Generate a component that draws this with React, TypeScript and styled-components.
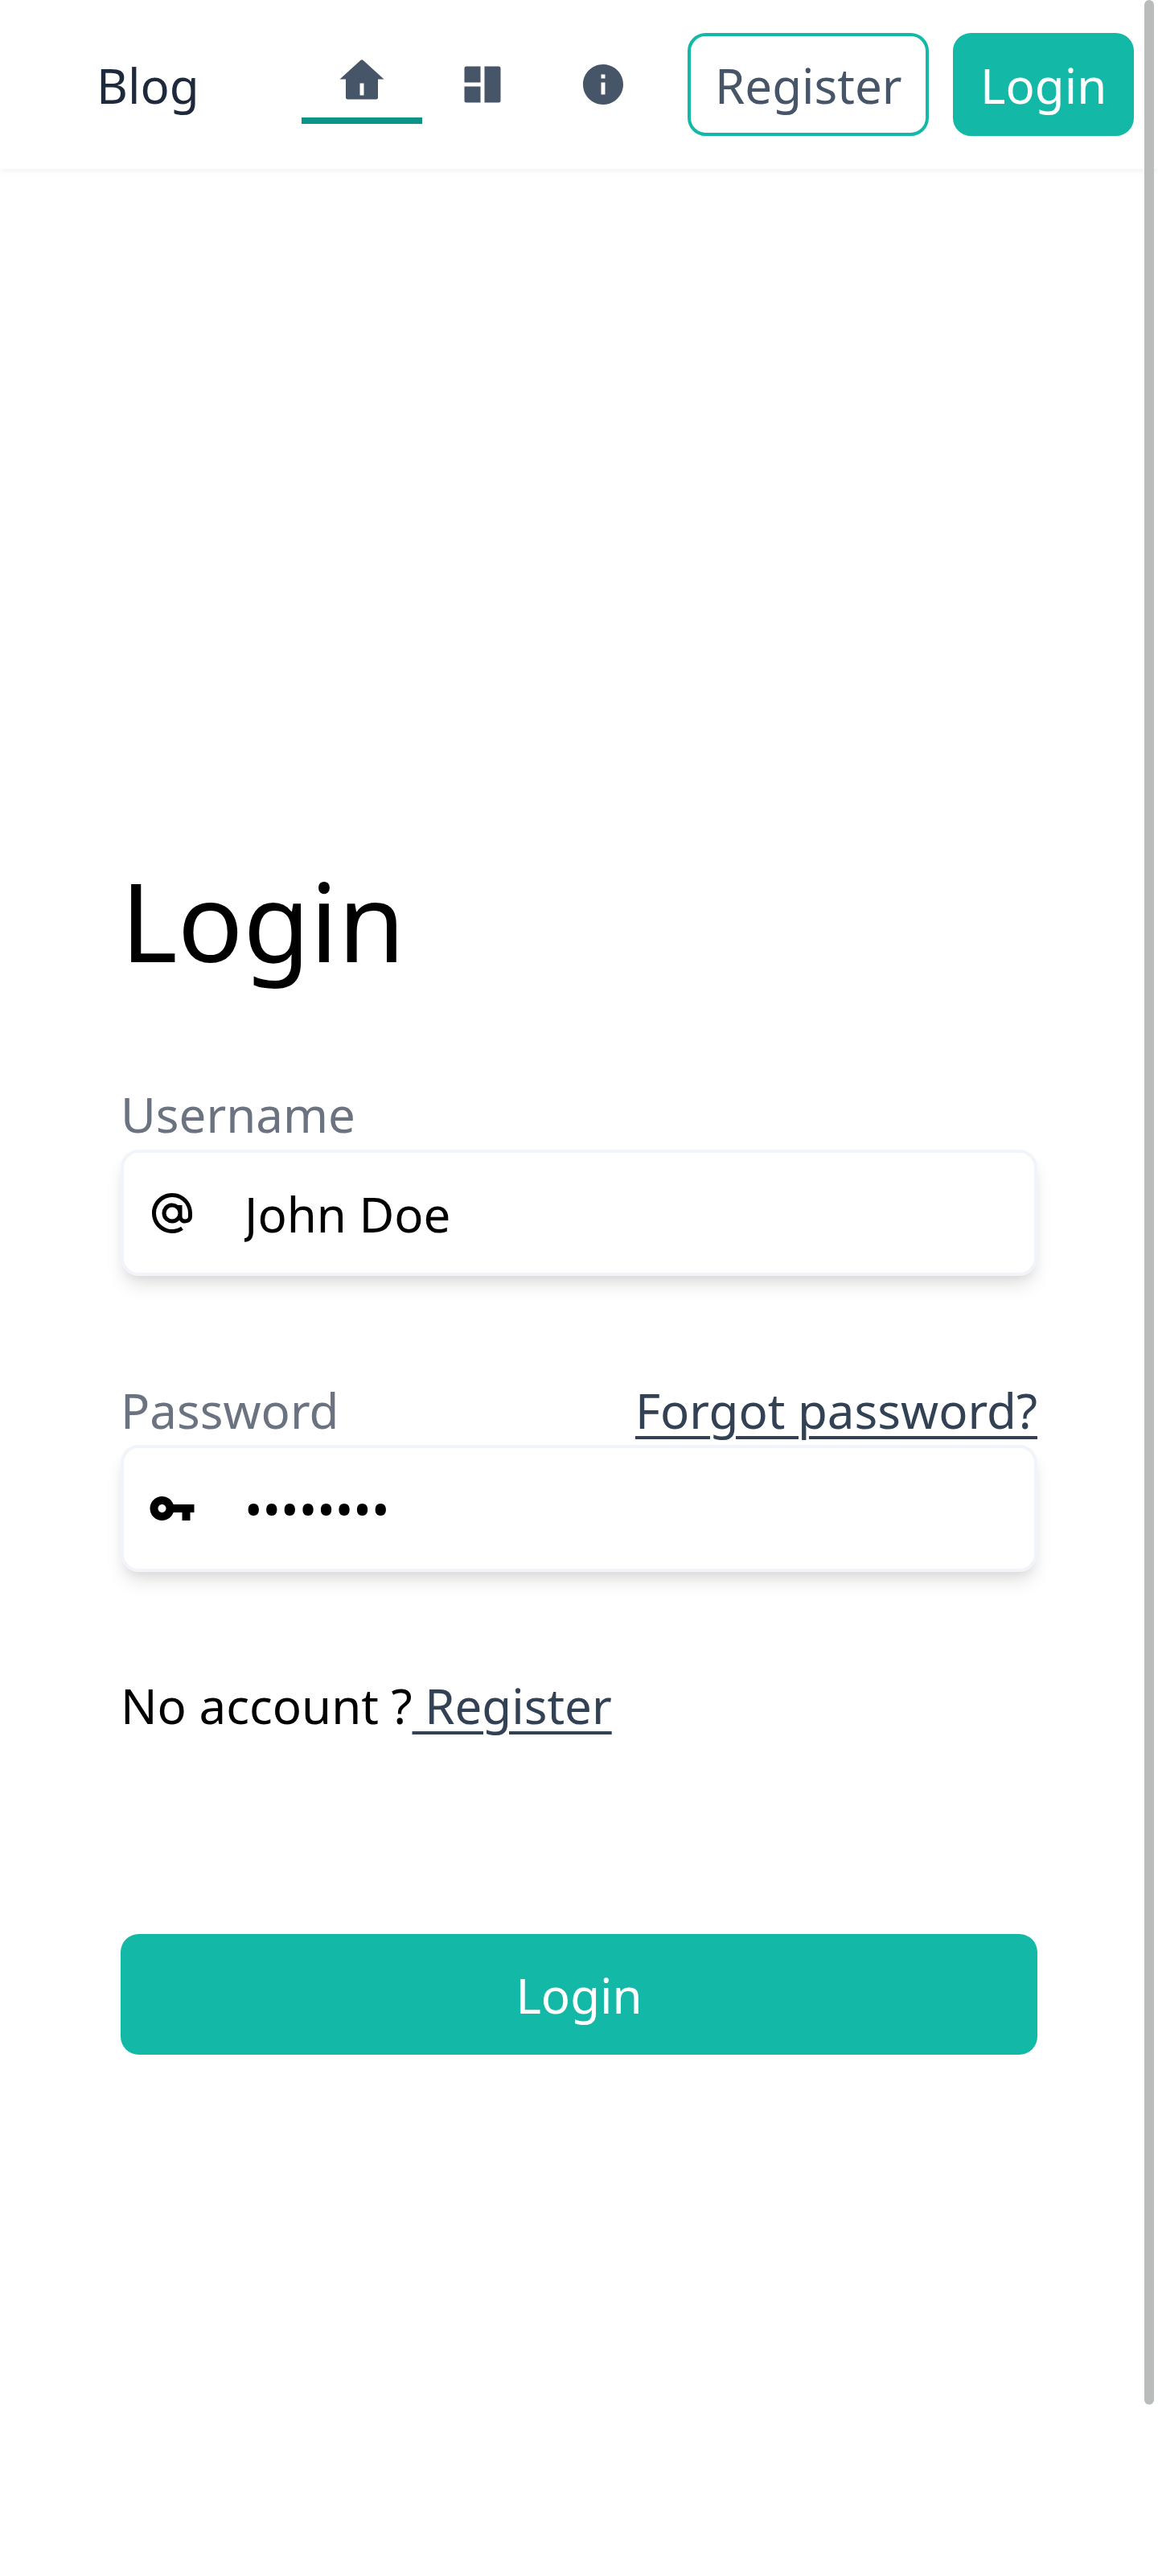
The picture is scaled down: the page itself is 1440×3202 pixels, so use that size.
import React from "react";
import styled, { createGlobalStyle } from "styled-components";

const GlobalStyle = createGlobalStyle`
  *, *::before, *::after { box-sizing: border-box; }
  body {
    margin: 0;
    background: #fff;
    color: #000;
    font-family: "Noto Sans", sans-serif;
    font-size: 60px;
    line-height: 90px;
  }
`;

const Page = styled.div`
  position: relative;
  height: 3202px;
  overflow: hidden;
`;

const Header = styled.header`
  display: flex;
  align-items: center;
  justify-content: space-between;
  height: 210px;
  padding: 0 30px 0 120px;
  background: #fff;
  box-shadow: 0 3.75px 7.5px 0 rgba(0, 0, 0, 0.05);
`;

const Brand = styled.a`
  padding-top: 2px;
  color: #1e293b;
`;

const Actions = styled.div`
  display: flex;
  align-items: center;
  gap: 30px;
`;

const Nav = styled.nav`
  display: flex;
  align-items: center;
`;

const NavItem = styled.a<{ $active?: boolean }>`
  display: flex;
  justify-content: center;
  width: 150px;
  padding: 15px 0;
  color: #475569;
  box-sizing: content-box;
  border-bottom: ${(p) => (p.$active ? "8px solid #0d9488" : "0")};
`;

const Icon = styled.svg`
  display: block;
  width: 60px;
  height: 60px;
  fill: currentColor;
`;

const HeaderButton = styled.button<{ $filled?: boolean }>`
  padding: 16px 29.75px 14px;
  height: 127.5px;
  border: 4px solid #14b8a6;
  border-radius: 22.5px;
  background: ${(p) => (p.$filled ? "#14b8a6" : "transparent")};
  color: ${(p) => (p.$filled ? "#fff" : "#475569")};
  font: inherit;
`;

const Form = styled.form`
  display: flex;
  flex-direction: column;
  padding: 858.75px 150px 0;
`;

const Title = styled.h1`
  margin: 0 0 120px;
  font-size: 135px;
  line-height: 150px;
  font-weight: 400;
`;

const Field = styled.div`
  margin-bottom: 120px;
`;

const LabelRow = styled.div`
  display: flex;
  justify-content: space-between;
  height: 90px;
  padding-top: 1.4px;
`;

const Label = styled.label`
  color: #6b7280;
`;

const Link = styled.a`
  color: #334155;
  text-decoration: underline;
  text-decoration-thickness: 4px;
  text-underline-offset: 9px;
  white-space: pre;
`;

const InputBox = styled.div`
  display: flex;
  align-items: center;
  height: 157.5px;
  padding: 0 30px;
  gap: 60px;
  border: 4px solid #f1f5f9;
  border-radius: 22.5px;
  background: #fff;
  box-shadow: 0 15px 22.5px -3.75px rgba(0, 0, 0, 0.1),
    0 7.5px 15px -7.5px rgba(0, 0, 0, 0.1);
`;

const Input = styled.input`
  flex: 1;
  min-width: 0;
  height: 92px;
  padding: 2px 0 0;
  border: 0;
  outline: 0;
  background: transparent;
  color: #000;
  font: inherit;
`;

const Note = styled.p`
  height: 90px;
  margin: 0 0 240px;
  padding-top: 1px;
`;

const Submit = styled.button`
  height: 150px;
  padding: 31px 30px 29px;
  border: 0;
  border-radius: 22.5px;
  background: #14b8a6;
  color: #fff;
  font: inherit;
`;

const ScrollThumb = styled.div`
  position: absolute;
  top: 0;
  right: 5.5px;
  width: 11.25px;
  height: 2989px;
  border-radius: 6px;
  background: #babcbb;
`;

const paths = {
  home: "M20 20a1 1 0 0 1-1 1H5a1 1 0 0 1-1-1v-9H1l10.327-9.388a1 1 0 0 1 1.346 0L23 11h-3v9zm-9-7v6h2v-6h-2z",
  layout:
    "M11 13v8H4a1 1 0 0 1-1-1v-7h8zm2-10h7a1 1 0 0 1 1 1v16a1 1 0 0 1-1 1h-7V3zM3 4a1 1 0 0 1 1-1h7v8H3V4z",
  info: "M12 22C6.477 22 2 17.523 2 12S6.477 2 12 2s10 4.477 10 10-4.477 10-10 10zm-1-11v6h2v-6h-2zm0-4v2h2V7h-2z",
  at: "M20 12a8 8 0 1 0-3.562 6.657l1.11 1.664A9.953 9.953 0 0 1 12 22C6.477 22 2 17.523 2 12S6.477 2 12 2s10 4.477 10 10v1.5a3.5 3.5 0 0 1-6.396 1.966A5 5 0 1 1 15 8h2v5.5a1.5 1.5 0 0 0 3 0V12zm-8-3a3 3 0 1 0 0 6 3 3 0 0 0 0-6z",
  key: "M12.65 10C11.83 7.67 9.61 6 7 6c-3.31 0-6 2.69-6 6s2.69 6 6 6c2.61 0 4.83-1.67 5.65-4H17v4h4v-4h2v-4H12.65zM7 14c-1.1 0-2-.9-2-2s.9-2 2-2 2 .9 2 2-.9 2-2 2z",
};

function Glyph({ name }: { name: keyof typeof paths }) {
  return (
    <Icon viewBox="0 0 24 24" aria-hidden="true">
      <path d={paths[name]} />
    </Icon>
  );
}

export default function App() {
  return (
    <>
      <GlobalStyle />
      <Page>
        <Header>
          <Brand>Blog</Brand>
          <Actions>
            <Nav>
              <NavItem $active aria-label="Home">
                <Glyph name="home" />
              </NavItem>
              <NavItem aria-label="Dashboard">
                <Glyph name="layout" />
              </NavItem>
              <NavItem aria-label="About">
                <Glyph name="info" />
              </NavItem>
            </Nav>
            <HeaderButton>Register</HeaderButton>
            <HeaderButton $filled>Login</HeaderButton>
          </Actions>
        </Header>
        <Form onSubmit={(e) => e.preventDefault()}>
          <Title>Login</Title>
          <Field>
            <LabelRow>
              <Label htmlFor="username">Username</Label>
            </LabelRow>
            <InputBox>
              <Glyph name="at" />
              <Input id="username" type="text" defaultValue="John Doe" />
            </InputBox>
          </Field>
          <Field>
            <LabelRow>
              <Label htmlFor="password">Password</Label>
              <Link>Forgot password?</Link>
            </LabelRow>
            <InputBox>
              <Glyph name="key" />
              <Input id="password" type="password" defaultValue="password" />
            </InputBox>
          </Field>
          <Note>
            No account ?<Link> Register</Link>
          </Note>
          <Submit>Login</Submit>
        </Form>
        <ScrollThumb />
      </Page>
    </>
  );
}
